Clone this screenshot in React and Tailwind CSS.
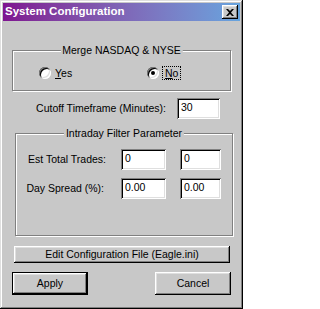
const raised =
  "shadow-[inset_-1px_-1px_0_#000,inset_1px_1px_0_#fff,inset_-2px_-2px_0_#808080,inset_2px_2px_0_#dfdfdf]";
const sunken =
  "shadow-[inset_1px_1px_0_#808080,inset_-1px_-1px_0_#fff,inset_2px_2px_0_#000,inset_-2px_-2px_0_#dfdfdf]";
const etched = "border border-[#808080] shadow-[inset_1px_1px_0_#fff,1px_1px_0_#fff]";

function TextBox({ value, w, h = "h-[21px]" }) {
  return (
    <div className={`${w} ${h} bg-white ${sunken} pl-[4px] pt-[3px] leading-[13px]`}>
      {value}
    </div>
  );
}

function Radio({ checked }) {
  return (
    <span
      className={`w-[12px] h-[12px] rounded-full bg-white flex items-center justify-center ${sunken}`}
    >
      {checked && <span className="w-[4px] h-[4px] rounded-full bg-black" />}
    </span>
  );
}

function Group({ label, className, children }) {
  return (
    <div className={`relative ${etched} ${className}`}>
      <span className="absolute -top-[8px] left-1/2 -translate-x-1/2 bg-[#c8c8c8] px-[2px] whitespace-nowrap leading-[14px]">
        {label}
      </span>
      {children}
    </div>
  );
}

export default function App() {
  return (
    <div
      className="w-[243px] h-[309px] bg-[#c8c8c8] p-[3px] flex flex-col text-black text-[10.5px] shadow-[inset_-1px_-1px_0_#000,inset_1px_1px_0_#dfdfdf,inset_-2px_-2px_0_#808080,inset_2px_2px_0_#fff]"
      style={{ fontFamily: '"Liberation Sans", Arial, sans-serif' }}
    >
      {/* title bar */}
      <div className="h-[18px] flex items-center justify-between pl-[2px] pr-[2px] bg-gradient-to-r from-[#7e1290] to-[#66a4de]">
        <span className="text-white font-bold text-[11.5px] leading-none">System Configuration</span>
        <button className={`w-[16px] h-[14px] bg-[#c8c8c8] flex items-center justify-center ${raised}`}>
          <svg width="8" height="7" viewBox="0 0 8 7">
            <path d="M0 0h2l2 2 2-2h2L5 3.5 8 7H6L4 5 2 7H0l3-3.5z" fill="#000" />
          </svg>
        </button>
      </div>

      {/* merge group */}
      <Group label="Merge NASDAQ & NYSE" className="mt-[29px] ml-[9px] w-[219px] h-[41px]">
        <div className="flex items-center pl-[26px] pt-[15px]">
          <div className="w-[108px] flex items-center gap-[4px]">
            <Radio />
            <span className="leading-[13px]">
              <span className="underline">Y</span>es
            </span>
          </div>
          <div className="flex items-center gap-[3px]">
            <Radio checked />
            <span className="border border-dotted border-black px-[2px] leading-[12px]">
              <span className="underline">N</span>o
            </span>
          </div>
        </div>
      </Group>

      {/* cutoff */}
      <div className="mt-[7px] flex items-center">
        <span className="w-[164px] text-right pr-[1px]">Cutoff Timeframe (Minutes):</span>
        <div className="ml-[10px]">
          <TextBox value="30" w="w-[43px]" />
        </div>
      </div>

      {/* intraday group */}
      <Group label="Intraday Filter Parameter" className="mt-[14px] ml-[12px] w-[218px] h-[103px]">
        <div className="pt-[15px] flex flex-col gap-[8px]">
          <div className="flex items-center">
            <span className="w-[90px] text-right">Est Total Trades:</span>
            <div className="ml-[15px]">
              <TextBox value="0" w="w-[45px]" />
            </div>
            <div className="ml-[14px]">
              <TextBox value="0" w="w-[41px]" />
            </div>
          </div>
          <div className="flex items-center">
            <span className="w-[88px] text-right">Day Spread (%):</span>
            <div className="ml-[17px]">
              <TextBox value="0.00" w="w-[45px]" />
            </div>
            <div className="ml-[14px]">
              <TextBox value="0.00" w="w-[41px]" />
            </div>
          </div>
        </div>
      </Group>

      {/* edit button */}
      <button className={`mt-[10px] ml-[11px] w-[216px] h-[17px] bg-[#c8c8c8] ${raised} leading-none`}>
        Edit Configuration File (Eagle.ini)
      </button>

      {/* apply / cancel */}
      <div className="mt-[9px] ml-[9px] flex gap-[67px]">
        <button className="w-[76px] h-[23px] border border-black p-0 bg-[#c8c8c8]">
          <div className={`w-full h-full flex items-center justify-center ${raised}`}>Apply</div>
        </button>
        <button className={`w-[76px] h-[23px] bg-[#c8c8c8] ${raised}`}>Cancel</button>
      </div>
    </div>
  );
}
